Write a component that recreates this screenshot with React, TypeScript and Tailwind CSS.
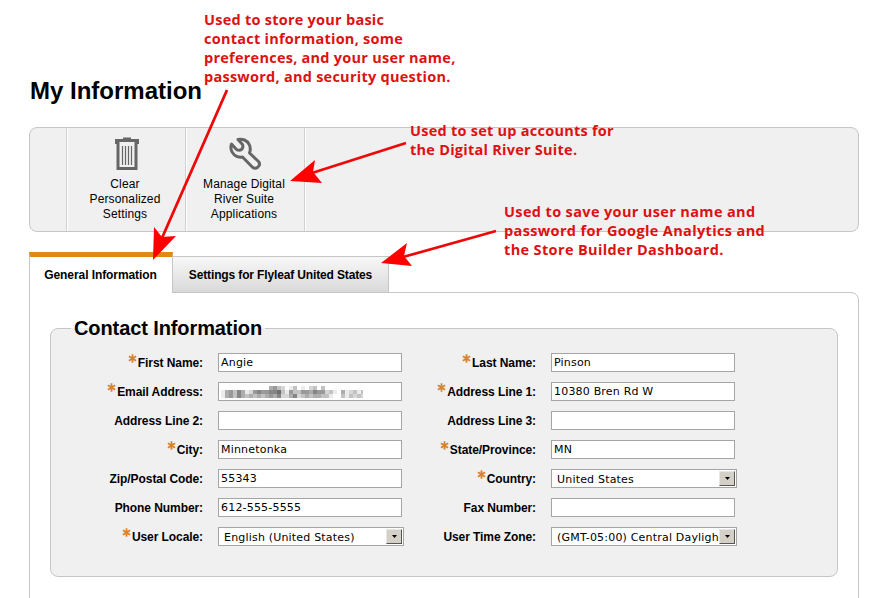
import React from "react";

const Star = () => (
  <svg width="9" height="9" viewBox="0 0 9 9" className="mr-px mb-[8px] shrink-0">
    <path d="M4.5 0.3V8.700M0.900 2.2L8.100 6.800M8.100 2.2L0.900 6.800" stroke="#d8822c" strokeWidth="1.8" fill="none" />
  </svg>
);

type FieldProps = {
  label: string;
  value?: string;
  required?: boolean;
  select?: boolean;
  redacted?: boolean;
  labelWidth: string;
};

const rows = [
  { y: 0, tones: "000000000000453201301023030000000000" },
  { y: 4, tones: "145364125655667315335546552310412313" },
  { y: 8, tones: "145364343434546224623434433100313232" },
];

const Redacted = () => (
  <svg width="142" height="12" shapeRendering="crispEdges">
    {rows.map((r) =>
      r.tones.split("").map((t, i) => (
        <rect key={i} x={i * 4} y={r.y} width="4" height="4" fill="#000" opacity={Number(t) * 0.08} />
      )),
    )}
  </svg>
);

const Field = ({ label, value = "", required, select, redacted, labelWidth }: FieldProps) => (
  <div className="flex h-[29px] items-start">
    <div className={"flex h-[19px] shrink-0 items-center justify-end text-[12px] font-bold leading-[19px] tracking-[-0.08px] " + labelWidth}>
      {required && <Star />}
      <span className="whitespace-nowrap pt-px">{label}</span>
    </div>
    <div
      className={
        "ml-[15px] flex h-[19px] shrink-0 items-center border border-[#a5a5a5] bg-white font-['DejaVu_Sans',sans-serif] text-[11px] leading-[17px] tracking-[0.19px] " +
        (select ? "w-[186px] pl-[5px]" : "w-[184px] pl-[2px]")
      }
    >
      {redacted ? (
        <Redacted />
      ) : (
        <span className={"min-w-0 flex-1 overflow-hidden whitespace-nowrap " + (select ? "pt-px" : "")}>{value}</span>
      )}
      {select && (
        <span className="mr-px flex h-[15px] w-[16px] shrink-0 items-center justify-center border border-t-[#e8e6e2] border-l-[#e8e6e2] border-r-[#555] border-b-[#555] bg-[#d4d0c8]">
          <svg width="5" height="3"><path d="M0 0H5L2.5 3Z" fill="#000" /></svg>
        </span>
      )}
    </div>
  </div>
);

const Tool = ({ children, lines }: { children: React.ReactNode; lines: string[] }) => (
  <div className="flex w-[119px] flex-col items-center border-l border-[#d0d0d0] pt-[9px] pr-[2px] shadow-[inset_1px_0_0_#fff]">
    <div className="flex h-[40px] items-start pl-[3px]">{children}</div>
    <div className="text-center text-[12px] leading-[15px] tracking-[0.13px]">
      {lines.map((l) => <div key={l} className="whitespace-nowrap">{l}</div>)}
    </div>
  </div>
);

const Note = ({ lines, className }: { lines: string[]; className: string }) => (
  <div className={"absolute font-['Open_Sans',sans-serif] text-[14.5px] font-bold leading-[19px] text-[#dd1111] " + className}>
    {lines.map((l) => <div key={l} className="whitespace-nowrap">{l}</div>)}
  </div>
);

export default function App() {
  return (
    <div className="relative h-[598px] w-[879px] overflow-hidden bg-white pl-[29px] pt-[76px] font-['Liberation_Sans',Arial,sans-serif] text-black">
      <h1 className="h-[51px] pl-px text-[24px] font-bold leading-[30px]">My Information</h1>

      <div className="flex h-[105px] w-[830px] rounded-[8px] border border-[#c6c6c6] bg-[#f0f0f0] pl-[36px]">
        <Tool lines={["Clear", "Personalized", "Settings"]}>
          <svg width="24" height="34" viewBox="0 0 24 34" fill="none" stroke="#666">
            <path d="M1.500 7V3.500H22.500V7M8 2H16" strokeWidth="3" />
            <path d="M3 5V31.500H21V5" strokeWidth="3" />
            <path d="M7.500 9V28M10.500 9V28M13.500 9V28M16.500 9V28" strokeWidth="1.2" />
          </svg>
        </Tool>
        <Tool lines={["Manage Digital", "River Suite", "Applications"]}>
          <svg width="34" height="34" viewBox="0 0 34 34" fill="none" stroke="#666" strokeWidth="3" strokeLinejoin="round">
            <path d="M2.500 7C0.500 13 4 18 8 19.500Q11 20.500 13.500 20L23.500 30.200Q26 32.500 29 30Q31.800 27.500 29.500 24.500L20.500 16C23 9.500 19 4.500 15.500 3Q12 1.700 9 2.500L13.500 7.500Q14.500 10 13 12Q10.500 14.200 7.500 12.500Z" />
          </svg>
        </Tool>
        <div className="w-[3px] border-l border-[#d0d0d0] shadow-[inset_1px_0_0_#fff]" />
      </div>

      <div className="mt-[20px] flex h-[41px] items-start">
        <div className="relative z-10 h-[41px] w-[144px] border-l border-r border-t-[5px] border-l-[#c6c6c6] border-r-[#c6c6c6] border-t-[#e08a14] bg-white pr-px text-center text-[12px] font-bold leading-[36px] tracking-[-0.08px]">General Information</div>
        <div className="mt-[4px] h-[37px] w-[216px] border-t border-r border-b border-[#c6c6c6] bg-linear-to-b from-[#f8f8f8] to-[#d9d9d9] text-center text-[12px] font-bold leading-[36px] tracking-[-0.14px]">Settings for Flyleaf United States</div>
      </div>
      <div className="-mt-px h-[320px] w-[830px] rounded-tr-[8px] border border-[#c6c6c6] px-[20px] pt-[35px]">
        <div className="relative h-[249px] w-[788px] rounded-[8px] border border-[#c6c6c6] bg-[#f0f0f0] pt-[24px]">
          <h2 className="absolute -top-[15px] left-[20px] bg-[linear-gradient(#fff_50%,#f0f0f0_50%)] px-[3px] text-[20px] font-bold leading-[28px] tracking-[-0.1px]">Contact Information</h2>
          <div className="flex">
            <div className="w-[353px] shrink-0">
              <Field labelWidth="w-[152px]" label="First Name:" value="Angie" required />
              <Field labelWidth="w-[152px]" label="Email Address:" required redacted />
              <Field labelWidth="w-[152px]" label="Address Line 2:" />
              <Field labelWidth="w-[152px]" label="City:" value="Minnetonka" required />
              <Field labelWidth="w-[152px]" label="Zip/Postal Code:" value="55343" />
              <Field labelWidth="w-[152px]" label="Phone Number:" value="612-555-5555" />
              <Field labelWidth="w-[152px]" label="User Locale:" value="English (United States)" required select />
            </div>
            <div>
              <Field labelWidth="w-[132px]" label="Last Name:" value="Pinson" required />
              <Field labelWidth="w-[132px]" label="Address Line 1:" value="10380 Bren Rd W" required />
              <Field labelWidth="w-[132px]" label="Address Line 3:" />
              <Field labelWidth="w-[132px]" label="State/Province:" value="MN" required />
              <Field labelWidth="w-[132px]" label="Country:" value="United States" required select />
              <Field labelWidth="w-[132px]" label="Fax Number:" />
              <Field labelWidth="w-[132px]" label="User Time Zone:" value="(GMT-05:00) Central Daylight" select />
            </div>
          </div>
        </div>
      </div>

      <Note className="left-[204px] top-[10px] tracking-[0.25px]" lines={["Used to store your basic", "contact information, some", "preferences, and your user name,", "password, and security question."]} />
      <Note className="left-[410px] top-[121px] tracking-[0.25px]" lines={["Used to set up accounts for", "the Digital River Suite."]} />
      <Note className="left-[504px] top-[202px] tracking-[0.36px]" lines={["Used to save your user name and", "password for Google Analytics and", "the Store Builder Dashboard."]} />
      <svg className="absolute left-0 top-0 z-20" width="879" height="598" fill="#f00">
        <path d="M227 90L162 238M406 143L312 173M496 231L403 257" stroke="#ee0808" strokeWidth="2.8" />
        <path d="M153 260L154 227L162 237L176 236Z" />
        <path d="M290 181L315 160L313 172L322 183Z" />
        <path d="M381 263L407 243L404 256L412 266Z" />
      </svg>
    </div>
  );
}
